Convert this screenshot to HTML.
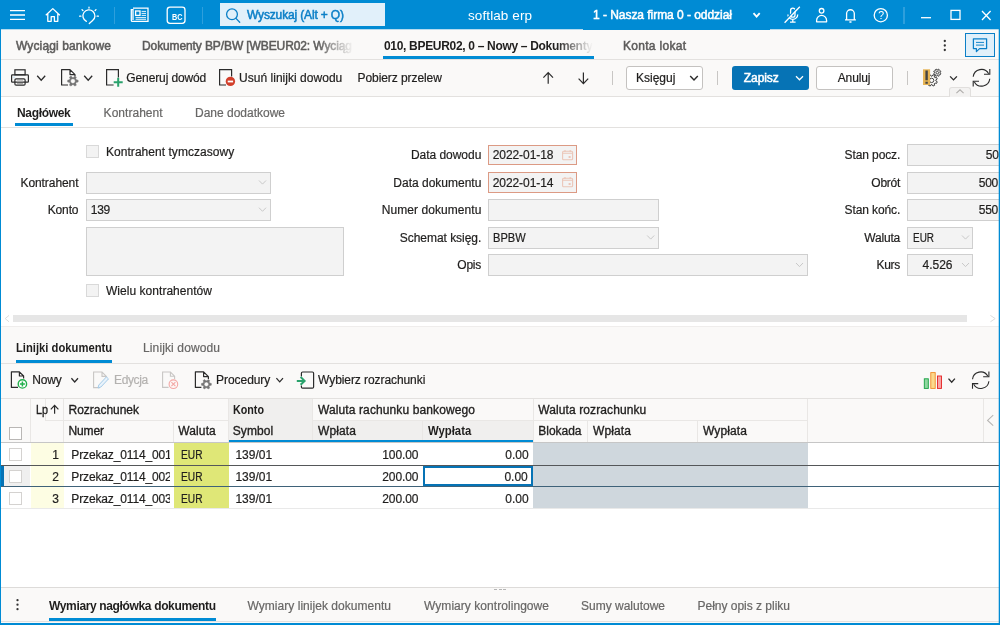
<!DOCTYPE html>
<html lang="pl"><head><meta charset="utf-8"><title>softlab erp</title>
<style>
html,body{margin:0;padding:0;}
body{width:1000px;height:625px;overflow:hidden;position:relative;background:#fff;will-change:transform;font-family:"Liberation Sans", sans-serif;}
.b{position:absolute;box-sizing:border-box;}
.t{position:absolute;white-space:nowrap;line-height:20px;height:20px;-webkit-text-stroke:0.2px currentColor;}
svg{position:absolute;overflow:visible;}
</style></head><body>
<div class="b" style="left:0px;top:0px;width:1000px;height:29px;background:#008bd4;"></div>
<div class="b" style="left:0px;top:29px;width:1000px;height:1px;background:#b5dbef;"></div>
<div class="b" style="left:583px;top:29px;width:187px;height:1px;background:#008bd4;"></div>
<div class="b" style="left:0px;top:29px;width:1000px;height:67px;background:#faf9f8;"></div>
<div class="b" style="left:0px;top:29px;width:1000px;height:1px;background:#b5dbef;"></div>
<div class="b" style="left:583px;top:29px;width:187px;height:1px;background:#008bd4;"></div>
<div class="b" style="left:0px;top:59px;width:1000px;height:1px;background:#e3e1df;"></div>
<div class="b" style="left:0px;top:96px;width:1000px;height:1px;background:#e3e1df;"></div>
<div class="b" style="left:0px;top:127px;width:1000px;height:1px;background:#e3e1df;"></div>
<div class="b" style="left:0px;top:326px;width:1000px;height:116px;background:#faf9f8;"></div>
<div class="b" style="left:0px;top:326px;width:1000px;height:1px;background:#efedec;"></div>
<div class="b" style="left:0px;top:363px;width:1000px;height:1px;background:#e3e1df;"></div>
<div class="b" style="left:0px;top:398px;width:1000px;height:1px;background:#e3e1df;"></div>
<div class="b" style="left:0px;top:588px;width:1000px;height:37px;background:#faf9f8;"></div>
<div class="b" style="left:0px;top:587px;width:1000px;height:1px;background:#dddbd9;"></div>
<div class="b" style="left:0px;top:621px;width:1000px;height:1px;background:#e3e1df;"></div>
<div class="b" style="left:220px;top:3px;width:165px;height:23px;background:#e1f0fa;"></div>
<div class="b" style="left:113.5px;top:7px;width:1.5px;height:17px;background:#2e9fdc;"></div>
<div class="b" style="left:201.5px;top:7px;width:1.5px;height:17px;background:#2e9fdc;"></div>
<div class="b" style="left:902.5px;top:7px;width:2px;height:17px;background:#2e9fdc;"></div>
<div class="b" style="left:318px;top:32px;width:40px;height:26px;background:linear-gradient(90deg,rgba(250,249,248,0),rgba(250,249,248,1) 90%);z-index:2;"></div>
<div class="b" style="left:556px;top:32px;width:40px;height:24px;background:linear-gradient(90deg,rgba(250,249,248,0),rgba(250,249,248,1) 92%);z-index:2;"></div>
<div class="b" style="left:383px;top:56px;width:211px;height:3px;background:#008bd4;z-index:3;"></div>
<div class="b" style="left:965px;top:33px;width:30px;height:24px;background:#e1f0fa;border:1px solid #0b7fc7;"></div>
<div class="b" style="left:612px;top:71px;width:1px;height:14px;background:#c8c6c4;"></div>
<div class="b" style="left:717px;top:71px;width:1px;height:14px;background:#c8c6c4;"></div>
<div class="b" style="left:907px;top:71px;width:1px;height:14px;background:#c8c6c4;"></div>
<div class="b" style="left:626px;top:66px;width:77px;height:24px;background:#fff;border:1px solid #c4c2c0;border-radius:3px;"></div>
<div class="b" style="left:732px;top:66px;width:77px;height:24px;background:#0673b5;border-radius:3px;"></div>
<div class="b" style="left:816px;top:66px;width:77px;height:24px;background:#fff;border:1px solid #c4c2c0;border-radius:3px;"></div>
<div class="b" style="left:949px;top:87px;width:22px;height:10px;background:#f3f2f1;border:1px solid #e1dfdd;border-radius:3px 3px 0 0;border-bottom:none;"></div>
<div class="b" style="left:15px;top:123px;width:58px;height:3px;background:#008bd4;"></div>
<div class="b" style="left:86px;top:145px;width:13px;height:13px;background:#f3f3f3;border:1px solid #d9d9d9;"></div>
<div class="b" style="left:86px;top:172px;width:185px;height:22px;background:#f3f3f3;border:1px solid #cfcfcf;"></div>
<div class="b" style="left:86px;top:199px;width:185px;height:22px;background:#f3f3f3;border:1px solid #cfcfcf;"></div>
<div class="b" style="left:86px;top:227px;width:258px;height:49px;background:#f3f3f3;border:1px solid #cfcfcf;"></div>
<div class="b" style="left:86px;top:284px;width:13px;height:13px;background:#f3f3f3;border:1px solid #d9d9d9;"></div>
<div class="b" style="left:488px;top:145px;width:89px;height:20px;background:#f3f3f3;border:1px solid #dc9a84;"></div>
<div class="b" style="left:488px;top:172px;width:89px;height:21px;background:#f3f3f3;border:1px solid #dc9a84;"></div>
<div class="b" style="left:488px;top:199px;width:171px;height:22px;background:#f3f3f3;border:1px solid #cfcfcf;"></div>
<div class="b" style="left:488px;top:227px;width:171px;height:22px;background:#f3f3f3;border:1px solid #cfcfcf;"></div>
<div class="b" style="left:488px;top:254px;width:320px;height:22px;background:#f3f3f3;border:1px solid #cfcfcf;"></div>
<div class="b" style="left:907px;top:144px;width:100px;height:22px;background:#f3f3f3;border:1px solid #cfcfcf;"></div>
<div class="b" style="left:907px;top:172px;width:100px;height:22px;background:#f3f3f3;border:1px solid #cfcfcf;"></div>
<div class="b" style="left:907px;top:199px;width:100px;height:22px;background:#f3f3f3;border:1px solid #cfcfcf;"></div>
<div class="b" style="left:907px;top:227px;width:66px;height:22px;background:#f3f3f3;border:1px solid #cfcfcf;"></div>
<div class="b" style="left:907px;top:254px;width:66px;height:22px;background:#f3f3f3;border:1px solid #cfcfcf;"></div>
<div class="b" style="left:13px;top:315px;width:954px;height:7px;background:#e6e6e6;"></div>
<div class="b" style="left:16px;top:360px;width:96px;height:3px;background:#008bd4;z-index:3;"></div>
<div class="b" style="left:229px;top:399px;width:83px;height:42px;background:#f0efee;"></div>
<div class="b" style="left:312px;top:421px;width:221px;height:20px;background:#f0efee;"></div>
<div class="b" style="left:30px;top:399px;width:1px;height:43px;background:#e9e7e5;"></div>
<div class="b" style="left:45px;top:399px;width:1px;height:22px;background:#e9e7e5;"></div>
<div class="b" style="left:63px;top:399px;width:1px;height:43px;background:#e9e7e5;"></div>
<div class="b" style="left:173px;top:421px;width:1px;height:21px;background:#e9e7e5;"></div>
<div class="b" style="left:228px;top:399px;width:1px;height:43px;background:#e9e7e5;"></div>
<div class="b" style="left:312px;top:399px;width:1px;height:43px;background:#e9e7e5;"></div>
<div class="b" style="left:422px;top:421px;width:1px;height:21px;background:#e9e7e5;"></div>
<div class="b" style="left:533px;top:399px;width:1px;height:43px;background:#e9e7e5;"></div>
<div class="b" style="left:587px;top:421px;width:1px;height:21px;background:#e9e7e5;"></div>
<div class="b" style="left:697px;top:421px;width:1px;height:21px;background:#e9e7e5;"></div>
<div class="b" style="left:807px;top:399px;width:1px;height:43px;background:#e9e7e5;"></div>
<div class="b" style="left:983px;top:399px;width:1px;height:43px;background:#e9e7e5;"></div>
<div class="b" style="left:45px;top:420px;width:184px;height:1px;background:#e9e7e5;"></div>
<div class="b" style="left:312px;top:420px;width:496px;height:1px;background:#e9e7e5;"></div>
<div class="b" style="left:1px;top:442px;width:998px;height:1px;background:#c6c6c6;"></div>
<div class="b" style="left:229px;top:440px;width:304px;height:2px;background:#008bd4;"></div>
<div class="b" style="left:9px;top:427px;width:13px;height:13px;background:#fff;border:1px solid #b9b7b5;"></div>
<div class="b" style="left:31px;top:443px;width:33px;height:22px;background:#fdfde3;"></div>
<div class="b" style="left:174px;top:443px;width:55px;height:22px;background:#dfe777;"></div>
<div class="b" style="left:533px;top:443px;width:275px;height:22px;background:#cfd7dd;"></div>
<div class="b" style="left:9px;top:448px;width:13px;height:13px;background:#fff;border:1px solid #d4d2d0;z-index:4;"></div>
<div class="b" style="left:31px;top:465px;width:33px;height:22px;background:#fdfde3;"></div>
<div class="b" style="left:174px;top:465px;width:55px;height:22px;background:#dfe777;"></div>
<div class="b" style="left:533px;top:465px;width:275px;height:22px;background:#cfd7dd;"></div>
<div class="b" style="left:9px;top:470px;width:13px;height:13px;background:#fff;border:1px solid #d4d2d0;z-index:4;"></div>
<div class="b" style="left:31px;top:487px;width:33px;height:21px;background:#fdfde3;"></div>
<div class="b" style="left:174px;top:487px;width:55px;height:21px;background:#dfe777;"></div>
<div class="b" style="left:533px;top:487px;width:275px;height:21px;background:#cfd7dd;"></div>
<div class="b" style="left:9px;top:492px;width:13px;height:13px;background:#fff;border:1px solid #d4d2d0;z-index:4;"></div>
<div class="b" style="left:1px;top:508px;width:998px;height:1px;background:#e9e9e9;"></div>
<div class="b" style="left:4px;top:466px;width:26px;height:21px;background:#efefef;"></div>
<div class="b" style="left:1px;top:465px;width:998px;height:1px;background:#555759;z-index:3;"></div>
<div class="b" style="left:1px;top:486px;width:998px;height:1px;background:#3f6279;z-index:3;"></div>
<div class="b" style="left:1px;top:466px;width:3px;height:20px;background:#0673b5;"></div>
<div class="b" style="left:423px;top:466px;width:110px;height:20px;border:2px solid #0673b5;z-index:4;"></div>
<div class="b" style="left:49px;top:618px;width:167px;height:3px;background:#008bd4;z-index:3;"></div>
<div class="b" style="left:494px;top:589px;width:3px;height:1px;background:#b5b5b5;"></div>
<div class="b" style="left:498.5px;top:589px;width:3.5px;height:1px;background:#b5b5b5;"></div>
<div class="b" style="left:503px;top:589px;width:3px;height:1px;background:#b5b5b5;"></div>
<svg width="1000" height="625" viewBox="0 0 1000 625" style="left:0;top:0;z-index:5;pointer-events:none" fill="none"><path d="M259 180.5 l3.5 3.6 l3.5 -3.6" stroke="#c9c9c9" stroke-width="1" fill="none"/><path d="M259 207.7 l3.5 3.6 l3.5 -3.6" stroke="#c9c9c9" stroke-width="1" fill="none"/><path d="M647.2 235.5 l3.5 3.6 l3.5 -3.6" stroke="#c9c9c9" stroke-width="1" fill="none"/><path d="M796 263 l3.5 3.6 l3.5 -3.6" stroke="#c9c9c9" stroke-width="1" fill="none"/><path d="M962 235.5 l3.5 3.6 l3.5 -3.6" stroke="#c9c9c9" stroke-width="1" fill="none"/><path d="M962 263 l3.5 3.6 l3.5 -3.6" stroke="#c9c9c9" stroke-width="1" fill="none"/><path d="M10 10.6 H25 M10 15 H25 M10 19.4 H25" stroke="#fff" stroke-width="1.3" fill="none"/><path d="M45.8 15.3 L52.8 8.6 L59.8 15.3 M47.8 13.6 V21.3 H51.2 V16.6 H54.4 V21.3 H57.8 V13.6" stroke="#fff" stroke-width="1.3" fill="none" stroke-linejoin="round"/><path d="M86.4 21.3 A6 6 0 1 1 92.6 20.6 L89.3 23.6" stroke="#fff" stroke-width="1.3" fill="none" stroke-linecap="round"/><path d="M89 7.2 v0.9 M82 9.6 l0.9 0.9 M96 9.6 l-0.9 0.9 M79.6 16.2 h1.3 M97.1 16.2 h1.3" stroke="#fff" stroke-width="1.3" fill="none" stroke-linecap="round"/><path d="M133 8.2 H148 V21.4 H132.4 Q131.3 21.4 131.3 20.2 V9.6 H133 V20" stroke="#fff" stroke-width="1.3" fill="none" stroke-width="1.1"/><rect x="135.6" y="11" width="4.4" height="4.4" stroke="#fff" stroke-width="1.3" fill="none" stroke-width="1.1"/><path d="M141.6 11.4 H146 M141.6 13.4 H146 M141.6 15.4 H146 M135.6 17.6 H146 M135.6 19.3 H146" stroke="#fff" stroke-width="0.9"/><rect x="167.2" y="7.2" width="17.8" height="16.2" rx="2.8" stroke="#fff" stroke-width="1.3" fill="none" stroke-width="1.2"/><circle cx="232" cy="14.3" r="5.4" stroke="#0b7fc7" stroke-width="1.3"/><path d="M236 18.4 L239.7 22.2" stroke="#0b7fc7" stroke-width="1.3" stroke-linecap="round"/><path d="M753.5 13.2 L756.6 16.6 L759.7 13.2" stroke="#fff" stroke-width="1.8" fill="none"/><rect x="790.6" y="8.2" width="4.4" height="9" rx="2.2" stroke="#fff" stroke-width="1.3" fill="none" stroke-width="0.95"/><path d="M787.9 14.4 a4.9 4.9 0 0 0 9.8 0 M792.8 19.4 V22 M790 22.2 H795.6" stroke="#fff" stroke-width="1.3" fill="none" stroke-width="0.95"/><path d="M798.9 6.0 L783.7 22.0" stroke="#008bd4" stroke-width="1.3" fill="none"/><path d="M799.8 6.8 L784.6 22.8" stroke="#fff" stroke-width="1.3" fill="none" stroke-width="1.15"/><circle cx="821.6" cy="10.8" r="2.3" stroke="#fff" stroke-width="1.3" fill="none" stroke-width="1.05"/><path d="M816.6 21.8 V20.4 A5 5 0 0 1 826.6 20.4 V21.8 Z" stroke="#fff" stroke-width="1.3" fill="none" stroke-width="1.05" stroke-linejoin="round"/><path d="M845 19.8 H855.9 M846.6 19.8 V13.6 A3.85 3.85 0 0 1 854.3 13.6 V19.8 M849.4 22 H851.5" stroke="#fff" stroke-width="1.3" fill="none" stroke-width="1.05"/><circle cx="880.8" cy="15.2" r="6.6" stroke="#fff" stroke-width="1.3" fill="none" stroke-width="1.05"/><path d="M921 17.7 H931" stroke="#fff" stroke-width="1.3" fill="none" stroke-width="1.4"/><rect x="951" y="10.4" width="9" height="9" stroke="#fff" stroke-width="1.3" fill="none" stroke-width="1.3"/><path d="M982 11 L990.6 20 M990.6 11 L982 20" stroke="#fff" stroke-width="1.3" fill="none" stroke-width="1.3"/><circle cx="944.8" cy="41" r="1.15" fill="#333"/><circle cx="944.8" cy="45.5" r="1.15" fill="#333"/><circle cx="944.8" cy="50" r="1.15" fill="#333"/><path d="M973.4 38.8 H986.6 V48.6 H979.6 L976.4 51.6 V48.6 H973.4 Z" stroke="#0b7fc7" stroke-width="1.25" fill="none" stroke-linejoin="round"/><path d="M976 42.4 H984 M976 45.1 H984" stroke="#0b7fc7" stroke-width="0.95"/><rect x="14.9" y="69.8" width="10.2" height="5" stroke="#2b2b2b" stroke-width="1.2" fill="none" fill="#fff"/><rect x="11.6" y="74.9" width="16.8" height="7.3" rx="0.8" stroke="#2b2b2b" stroke-width="1.2" fill="none" fill="#fff"/><rect x="13.2" y="76.6" width="1.6" height="1.2" fill="#bfe0f5"/><rect x="14.9" y="78.8" width="10.2" height="6.4" rx="1.2" stroke="#2b2b2b" stroke-width="1.2" fill="none" fill="#f1f1f1"/><path d="M17 81.1 H23" stroke="#a6a6a6" stroke-width="1.3"/><path d="M17 83.3 H23" stroke="#555" stroke-width="0.6"/><path d="M37.2 75.8 l4.0 4.4 l4.0 -4.4" stroke="#2b2b2b" stroke-width="1.3" fill="none"/><path d="M68 85 H61.6 V69.6 H70 L75 74.6 V76 M70 69.6 V74.6 H75" stroke="#2b2b2b" stroke-width="1.2" fill="none" stroke-linejoin="round"/><path d="M78.12 80.16 L78.12 82.04 L76.38 82.35 L75.73 83.49 L76.32 85.15 L74.70 86.09 L73.56 84.74 L72.24 84.74 L71.10 86.09 L69.48 85.15 L70.07 83.49 L69.42 82.35 L67.68 82.04 L67.68 80.16 L69.42 79.85 L70.07 78.71 L69.48 77.05 L71.10 76.11 L72.24 77.46 L73.56 77.46 L74.70 76.11 L76.32 77.05 L75.73 78.71 L76.38 79.85 Z" stroke="#747474" stroke-width="0.5" fill="#747474" stroke-linejoin="round"/><circle cx="72.9" cy="81.1" r="2.4" stroke="#747474" stroke-width="0.5" fill="#faf9f8"/><path d="M84.2 75.8 l4.0 4.4 l4.0 -4.4" stroke="#2b2b2b" stroke-width="1.3" fill="none"/><path d="M113.6 85 H106.6 V69.6 H118.4 V77.4" stroke="#2b2b2b" stroke-width="1.2" fill="none"/><path d="M118.2 77.8 V86.8 M113.7 82.3 H122.7" stroke="#2aa26c" stroke-width="2"/><path d="M226 85 H219.6 V69.6 H231.6 V76.4" stroke="#2b2b2b" stroke-width="1.2" fill="none"/><circle cx="230.4" cy="81.4" r="4.7" fill="#d23f2b"/><path d="M227.7 81.5 H233.1" stroke="#fff" stroke-width="1.8"/><path d="M548.2 83.8 V72.8 M543.4 77.6 L548.2 72.6 L553 77.6" stroke="#2b2b2b" stroke-width="1.2" fill="none" stroke-width="1.3"/><path d="M583.4 72.4 V83.4 M578.6 78.6 L583.4 83.6 L588.2 78.6" stroke="#2b2b2b" stroke-width="1.2" fill="none" stroke-width="1.3"/><path d="M690.2 76.1 l3.8 3.8 l3.8 -3.8" stroke="#2b2b2b" stroke-width="1.45" fill="none"/><path d="M796 76.2 l3.5 3.6 l3.5 -3.6" stroke="#fff" stroke-width="1.25" fill="none"/><path d="M937.24 81.74 L936.55 83.42 L935.00 83.03 L934.24 83.79 L934.64 85.34 L932.97 86.04 L932.15 84.66 L931.07 84.67 L930.26 86.04 L928.58 85.35 L928.97 83.80 L928.21 83.04 L926.66 83.44 L925.96 81.77 L927.34 80.95 L927.33 79.87 L925.96 79.06 L926.65 77.38 L928.20 77.77 L928.96 77.01 L928.56 75.46 L930.23 74.76 L931.05 76.14 L932.13 76.13 L932.94 74.76 L934.62 75.45 L934.23 77.00 L934.99 77.76 L936.54 77.36 L937.24 79.03 L935.86 79.85 L935.87 80.93 Z" stroke="#333" stroke-width="0.9" fill="none" stroke-linejoin="round"/><circle cx="931.6" cy="80.4" r="2.2" stroke="#333" stroke-width="0.9" fill="none"/><path d="M940.90 73.55 L940.46 74.62 L939.36 74.29 L938.90 74.75 L939.24 75.85 L938.17 76.30 L937.63 75.28 L936.98 75.28 L936.45 76.30 L935.38 75.86 L935.71 74.76 L935.25 74.30 L934.15 74.64 L933.70 73.57 L934.72 73.03 L934.72 72.38 L933.70 71.85 L934.14 70.78 L935.24 71.11 L935.70 70.65 L935.36 69.55 L936.43 69.10 L936.97 70.12 L937.62 70.12 L938.15 69.10 L939.22 69.54 L938.89 70.64 L939.35 71.10 L940.45 70.76 L940.90 71.83 L939.88 72.37 L939.88 73.02 Z" stroke="#333" stroke-width="0.85" fill="none" stroke-linejoin="round"/><circle cx="937.3" cy="72.7" r="1.3" stroke="#333" stroke-width="0.85" fill="none"/><rect x="923" y="69.3" width="7.1" height="15.7" fill="#e6b455"/><path d="M926.6 70.6 V80.3 M926.6 81.7 V83.7" stroke="#444" stroke-width="2.4"/><path d="M950.1 76.4 l3.4 3.5 l3.4 -3.5" stroke="#2b2b2b" stroke-width="1.35" fill="none"/><path d="M973.2 76.8 A8.3 8.3 0 0 1 988.638 73.64999999999999 M989.8 78.8 A8.3 8.3 0 0 1 974.362 81.95" stroke="#2b2b2b" stroke-width="1.1" fill="none"/><path d="M989.8 69.1 V74.314 H983.99 M973.2 86.5 V81.286 H979.01" stroke="#2b2b2b" stroke-width="1.1" fill="none"/><path d="M956.4 93.2 L960 89.8 L963.6 93.2" stroke="#b0aeac" stroke-width="1.1" fill="none"/><rect x="562.6" y="151.2" width="10" height="8.6" rx="1" stroke="#ecc6b8" stroke-width="1.1" fill="none"/><path d="M562.6 153.2 H572.6 M565.0 150 V152 M570.2 150 V152" stroke="#ecc6b8" stroke-width="1.1"/><rect x="568.6" y="156" width="2" height="2" fill="#ecc6b8"/><rect x="562.6" y="178.2" width="10" height="8.6" rx="1" stroke="#ecc6b8" stroke-width="1.1" fill="none"/><path d="M562.6 180.2 H572.6 M565.0 177 V179 M570.2 177 V179" stroke="#ecc6b8" stroke-width="1.1"/><rect x="568.6" y="183" width="2" height="2" fill="#ecc6b8"/><path d="M9 315.4 L5.2 318.6 L9 321.8" stroke="#dcdcdc" stroke-width="1" fill="none"/><path d="M990.4 315.4 L995.2 318.6 L990.4 321.8" stroke="#dcdcdc" stroke-width="1" fill="none"/><path d="M18 387.4 H11.4 V371.8 H19.4 L23.6 376 V378.6 M19.4 371.8 V376 H23.6" stroke="#2b2b2b" stroke-width="1.2" fill="none" stroke-width="1.1" stroke-linejoin="round"/><circle cx="22.4" cy="383.9" r="4.2" stroke="#22b04c" stroke-width="1.4" fill="#fff"/><path d="M22.4 381.4 V386.4 M19.9 383.9 H24.9" stroke="#22b04c" stroke-width="1.5"/><path d="M71.4 378.2 l3.3 3.7 l3.3 -3.7" stroke="#2b2b2b" stroke-width="1.3" fill="none"/><path d="M100 387.6 H93.6 V372 H102 L106.4 376.4 V377.4 M102 372 V376.4 H106.4" stroke="#c8c6c4" stroke-width="1.1" fill="none"/><path d="M98 388 L98.8 385 L106.4 376.9 L108.5 378.9 L100.9 387 Z" stroke="#a5cbe8" stroke-width="1.0" fill="#e9f3fb" stroke-linejoin="round"/><path d="M168.6 387.4 H162.6 V372 H170.4 L174.6 376.2 V379 M170.4 372 V376.2 H174.6" stroke="#c8c6c4" stroke-width="1.1" fill="none"/><circle cx="173.4" cy="384.2" r="4.3" stroke="#f3a7a4" stroke-width="1.1" fill="#fdf6f5"/><path d="M171.4 382.2 L175.4 386.2 M175.4 382.2 L171.4 386.2" stroke="#f3a7a4" stroke-width="1.1"/><path d="M201.4 387.4 H195.4 V371.8 H203.6 L208.4 376.6 V379 M203.6 371.8 V376.6 H208.4" stroke="#2b2b2b" stroke-width="1.2" fill="none" stroke-width="1.1" stroke-linejoin="round"/><path d="M211.32 383.41 L211.32 385.19 L209.69 385.49 L209.07 386.56 L209.63 388.12 L208.09 389.00 L207.02 387.74 L205.78 387.74 L204.71 389.00 L203.17 388.12 L203.73 386.56 L203.11 385.49 L201.48 385.19 L201.48 383.41 L203.11 383.11 L203.73 382.04 L203.17 380.48 L204.71 379.60 L205.78 380.86 L207.02 380.86 L208.09 379.60 L209.63 380.48 L209.07 382.04 L209.69 383.11 Z" stroke="#747474" stroke-width="0.5" fill="#747474" stroke-linejoin="round"/><circle cx="206.4" cy="384.3" r="2.2" stroke="#747474" stroke-width="0.5" fill="#faf9f8"/><path d="M276.4 378.1 l3.3 3.7 l3.3 -3.7" stroke="#2b2b2b" stroke-width="1.25" fill="none"/><path d="M301.4 376.4 V373.2 Q301.4 372 302.6 372 H312.4 Q313.6 372 313.6 373.2 V387 Q313.6 388.2 312.4 388.2 H302.6 Q301.4 388.2 301.4 387 V385.4" stroke="#2b2b2b" stroke-width="1.2" fill="none" stroke-width="1.1"/><path d="M296.8 380.9 H303.6 M300.6 377 L304.6 380.9 L300.6 384.8" stroke="#2aa26c" stroke-width="2" fill="none"/><rect x="924.3" y="378.8" width="4" height="9.6" fill="#8fd7a0" stroke="#15a041" stroke-width="0.9"/><rect x="930.8" y="372.6" width="4.4" height="15.8" fill="#fbd98c" stroke="#f08a24" stroke-width="0.9"/><rect x="937.5" y="376" width="4" height="12.4" fill="#f7a3a3" stroke="#e52222" stroke-width="0.9"/><path d="M948.5 378.6 l3.2 3.7 l3.2 -3.7" stroke="#2b2b2b" stroke-width="1.3" fill="none"/><path d="M972.5 379.2 A8.2 8.2 0 0 1 987.7520000000001 376.09999999999997 M988.9000000000001 381.2 A8.2 8.2 0 0 1 973.648 384.3" stroke="#2b2b2b" stroke-width="1.1" fill="none"/><path d="M988.9000000000001 371.6 V376.756 H983.1600000000001 M972.5 388.79999999999995 V383.644 H978.24" stroke="#2b2b2b" stroke-width="1.1" fill="none"/><path d="M54.6 413.8 V405.6 M50.8 409.4 L54.6 405.4 L58.4 409.4" stroke="#2b2b2b" stroke-width="1.2" fill="none" stroke-width="1.1"/><path d="M993.2 415.2 L987.6 420.4 L993.2 425.6" stroke="#b7b5b3" stroke-width="1.1" fill="none"/><circle cx="17.5" cy="600.2" r="1.15" fill="#333"/><circle cx="17.5" cy="604.7" r="1.15" fill="#333"/><circle cx="17.5" cy="609.2" r="1.15" fill="#333"/></svg>
<div class="b" style="left:0px;top:29px;width:1px;height:596px;background:#008bd4;z-index:6;"></div>
<div class="b" style="left:999px;top:29px;width:1px;height:596px;background:#008bd4;z-index:6;"></div>
<div class="b" style="left:998px;top:29px;width:1px;height:594px;background:rgba(0,139,212,0.28);z-index:6;"></div>
<div class="b" style="left:0px;top:623px;width:1000px;height:2px;background:#008bd4;z-index:6;"></div>
<span class="t" id="t0" style="top:5.00px;font-size:12px;color:#0b7fc7;letter-spacing:-0.152px;left:247px;-webkit-text-stroke:0.5px currentColor;">Wyszukaj (Alt + Q)</span>
<span class="t" id="t1" style="top:5.50px;font-size:13.5px;color:#fff;letter-spacing:0.095px;left:468px;-webkit-text-stroke:0;">softlab erp</span>
<span class="t" id="t2" style="top:5.00px;font-size:12px;color:#fff;letter-spacing:-0.041px;left:593px;-webkit-text-stroke:0.5px currentColor;">1 - Nasza firma 0 - oddział</span>
<span class="t" id="t3" style="top:7.00px;font-size:8.5px;color:#fff;font-weight:700;-webkit-text-stroke:0;left:171.5px;display:inline-block;transform:scaleX(0.8550);transform-origin:left center;">BC</span>
<span class="t" id="t4" style="top:5.00px;font-size:10.5px;color:#fff;left:878.3px;-webkit-text-stroke:0;">?</span>
<span class="t" id="t5" style="top:36.00px;font-size:12px;color:#5c5b5a;letter-spacing:0.123px;left:16px;-webkit-text-stroke:0.5px currentColor;">Wyciągi bankowe</span>
<span class="t" id="t6" style="top:36.00px;font-size:12px;color:#5c5b5a;letter-spacing:-0.106px;left:142px;-webkit-text-stroke:0.5px currentColor;">Dokumenty BP/BW [WBEUR02: Wyciąg</span>
<span class="t" id="t7" style="top:36.00px;font-size:12px;color:#1f1e1d;font-weight:700;-webkit-text-stroke:0;letter-spacing:-0.316px;left:384px;">010, BPEUR02, 0 – Nowy – Dokumenty</span>
<span class="t" id="t8" style="top:36.00px;font-size:12px;color:#5c5b5a;letter-spacing:0.295px;left:623px;-webkit-text-stroke:0.5px currentColor;">Konta lokat</span>
<span class="t" id="t9" style="top:68.00px;font-size:12px;color:#1f1e1d;letter-spacing:-0.116px;left:126.3px;">Generuj dowód</span>
<span class="t" id="t10" style="top:68.00px;font-size:12px;color:#1f1e1d;letter-spacing:0.031px;left:239px;">Usuń linijki dowodu</span>
<span class="t" id="t11" style="top:68.00px;font-size:12px;color:#1f1e1d;letter-spacing:-0.070px;left:357.5px;">Pobierz przelew</span>
<span class="t" id="t12" style="top:68.00px;font-size:12px;color:#1f1e1d;letter-spacing:0.007px;left:636px;">Księguj</span>
<span class="t" id="t13" style="top:68.00px;font-size:12px;color:#fff;letter-spacing:-0.069px;left:743.8px;-webkit-text-stroke:0.5px currentColor;">Zapisz</span>
<span class="t" id="t14" style="top:68.00px;font-size:12px;color:#1f1e1d;letter-spacing:-0.112px;left:837.7px;">Anuluj</span>
<span class="t" id="t15" style="top:103.00px;font-size:12px;color:#1f1e1d;font-weight:700;-webkit-text-stroke:0;letter-spacing:-0.331px;left:17px;">Nagłówek</span>
<span class="t" id="t16" style="top:103.00px;font-size:12px;color:#686766;letter-spacing:0.031px;left:103.6px;">Kontrahent</span>
<span class="t" id="t17" style="top:103.00px;font-size:12px;color:#686766;letter-spacing:-0.006px;left:195px;">Dane dodatkowe</span>
<span class="t" id="t18" style="top:142.00px;font-size:12px;color:#1f1e1d;letter-spacing:0.040px;left:106px;">Kontrahent tymczasowy</span>
<span class="t" id="t19" style="top:173.00px;font-size:12px;color:#1f1e1d;letter-spacing:-0.080px;right:921.58px;">Kontrahent</span>
<span class="t" id="t20" style="top:200.00px;font-size:12px;color:#1f1e1d;letter-spacing:-0.140px;right:921.64px;">Konto</span>
<span class="t" id="t21" style="top:200.00px;font-size:12px;color:#1f1e1d;letter-spacing:-0.316px;left:90.8px;">139</span>
<span class="t" id="t22" style="top:281.00px;font-size:12px;color:#1f1e1d;letter-spacing:0.036px;left:106px;">Wielu kontrahentów</span>
<span class="t" id="t23" style="top:145.00px;font-size:12px;color:#1f1e1d;letter-spacing:-0.032px;right:518.73px;">Data dowodu</span>
<span class="t" id="t24" style="top:173.00px;font-size:12px;color:#1f1e1d;letter-spacing:-0.005px;right:518.70px;">Data dokumentu</span>
<span class="t" id="t25" style="top:200.00px;font-size:12px;color:#1f1e1d;letter-spacing:0.056px;right:518.64px;">Numer dokumentu</span>
<span class="t" id="t26" style="top:228.00px;font-size:12px;color:#1f1e1d;letter-spacing:-0.042px;right:518.74px;">Schemat księg.</span>
<span class="t" id="t27" style="top:255.00px;font-size:12px;color:#1f1e1d;letter-spacing:-0.229px;right:518.93px;">Opis</span>
<span class="t" id="t28" style="top:145.00px;font-size:12px;color:#1f1e1d;letter-spacing:-0.066px;left:492.7px;">2022-01-18</span>
<span class="t" id="t29" style="top:173.00px;font-size:12px;color:#1f1e1d;letter-spacing:-0.066px;left:492.7px;">2022-01-14</span>
<span class="t" id="t30" style="top:228.00px;font-size:12px;color:#1f1e1d;left:493px;display:inline-block;transform:scaleX(0.9224);transform-origin:left center;">BPBW</span>
<span class="t" id="t31" style="top:145.00px;font-size:12px;color:#1f1e1d;letter-spacing:-0.111px;right:99.81px;">Stan pocz.</span>
<span class="t" id="t32" style="top:173.00px;font-size:12px;color:#1f1e1d;letter-spacing:-0.254px;right:99.95px;">Obrót</span>
<span class="t" id="t33" style="top:200.00px;font-size:12px;color:#1f1e1d;letter-spacing:-0.111px;right:99.81px;">Stan końc.</span>
<span class="t" id="t34" style="top:228.00px;font-size:12px;color:#1f1e1d;letter-spacing:-0.181px;right:99.88px;">Waluta</span>
<span class="t" id="t35" style="top:255.00px;font-size:12px;color:#1f1e1d;letter-spacing:-0.296px;right:100.00px;">Kurs</span>
<span class="t" id="t36" style="top:145.00px;font-size:12px;color:#1f1e1d;letter-spacing:-0.300px;left:985.8px;">50</span>
<span class="t" id="t37" style="top:173.00px;font-size:12px;color:#1f1e1d;letter-spacing:-0.300px;left:978.8px;">500</span>
<span class="t" id="t38" style="top:200.00px;font-size:12px;color:#1f1e1d;letter-spacing:-0.300px;left:978.8px;">550</span>
<span class="t" id="t39" style="top:228.00px;font-size:12px;color:#1f1e1d;left:912.6px;display:inline-block;transform:scaleX(0.8286);transform-origin:left center;">EUR</span>
<span class="t" id="t40" style="top:255.00px;font-size:12px;color:#1f1e1d;letter-spacing:-0.008px;left:922.5px;">4.526</span>
<span class="t" id="t41" style="top:338.00px;font-size:12px;color:#1f1e1d;font-weight:700;-webkit-text-stroke:0;left:16.2px;display:inline-block;transform:scaleX(0.9370);transform-origin:left center;">Linijki dokumentu</span>
<span class="t" id="t42" style="top:338.00px;font-size:12px;color:#686766;letter-spacing:0.124px;left:143px;">Linijki dowodu</span>
<span class="t" id="t43" style="top:370.00px;font-size:12px;color:#1f1e1d;letter-spacing:-0.205px;left:32.3px;">Nowy</span>
<span class="t" id="t44" style="top:370.00px;font-size:12px;color:#b4b2b0;letter-spacing:-0.366px;left:114px;">Edycja</span>
<span class="t" id="t45" style="top:370.00px;font-size:12px;color:#1f1e1d;letter-spacing:-0.063px;left:216.1px;">Procedury</span>
<span class="t" id="t46" style="top:370.00px;font-size:12px;color:#1f1e1d;letter-spacing:-0.077px;left:318.1px;">Wybierz rozrachunki</span>
<span class="t" id="t47" style="top:400.00px;font-size:12px;color:#1f1e1d;left:35.6px;display:inline-block;transform:scaleX(0.8982);transform-origin:left center;-webkit-text-stroke:0.33px currentColor;">Lp</span>
<span class="t" id="t48" style="top:400.00px;font-size:12px;color:#1f1e1d;letter-spacing:-0.022px;left:68.5px;-webkit-text-stroke:0.33px currentColor;">Rozrachunek</span>
<span class="t" id="t49" style="top:400.00px;font-size:12px;color:#1f1e1d;font-weight:700;-webkit-text-stroke:0;left:232.7px;display:inline-block;transform:scaleX(0.8945);transform-origin:left center;">Konto</span>
<span class="t" id="t50" style="top:400.00px;font-size:12px;color:#1f1e1d;letter-spacing:0.111px;left:318px;-webkit-text-stroke:0.33px currentColor;">Waluta rachunku bankowego</span>
<span class="t" id="t51" style="top:400.00px;font-size:12px;color:#1f1e1d;letter-spacing:0.101px;left:538.3px;-webkit-text-stroke:0.33px currentColor;">Waluta rozrachunku</span>
<span class="t" id="t52" style="top:421.00px;font-size:12px;color:#1f1e1d;letter-spacing:-0.129px;left:68.5px;-webkit-text-stroke:0.33px currentColor;">Numer</span>
<span class="t" id="t53" style="top:421.00px;font-size:12px;color:#1f1e1d;letter-spacing:0.119px;left:178.3px;-webkit-text-stroke:0.33px currentColor;">Waluta</span>
<span class="t" id="t54" style="top:421.00px;font-size:12px;color:#1f1e1d;letter-spacing:0.117px;left:232.7px;-webkit-text-stroke:0.33px currentColor;">Symbol</span>
<span class="t" id="t55" style="top:421.00px;font-size:12px;color:#1f1e1d;letter-spacing:0.128px;left:318px;-webkit-text-stroke:0.33px currentColor;">Wpłata</span>
<span class="t" id="t56" style="top:421.00px;font-size:12px;color:#1f1e1d;font-weight:700;-webkit-text-stroke:0;left:428.4px;display:inline-block;transform:scaleX(0.9433);transform-origin:left center;">Wypłata</span>
<span class="t" id="t57" style="top:421.00px;font-size:12px;color:#1f1e1d;letter-spacing:-0.029px;left:538.3px;-webkit-text-stroke:0.33px currentColor;">Blokada</span>
<span class="t" id="t58" style="top:421.00px;font-size:12px;color:#1f1e1d;letter-spacing:0.128px;left:593px;-webkit-text-stroke:0.33px currentColor;">Wpłata</span>
<span class="t" id="t59" style="top:421.00px;font-size:12px;color:#1f1e1d;letter-spacing:0.125px;left:703px;-webkit-text-stroke:0.33px currentColor;">Wypłata</span>
<span class="t" id="t60" style="top:445.00px;font-size:12px;color:#1f1e1d;letter-spacing:-0.300px;right:941.30px;">1</span>
<span class="t" id="t61" style="top:445.00px;font-size:12px;color:#1f1e1d;letter-spacing:-0.135px;left:71.3px;width:98.5px;overflow:hidden;">Przekaz_0114_001</span>
<span class="t" id="t62" style="top:445.00px;font-size:12px;color:#1f1e1d;left:181.2px;display:inline-block;transform:scaleX(0.8483);transform-origin:left center;">EUR</span>
<span class="t" id="t63" style="top:445.00px;font-size:12px;color:#1f1e1d;letter-spacing:0.019px;left:235.4px;">139/01</span>
<span class="t" id="t64" style="top:445.00px;font-size:12px;color:#1f1e1d;letter-spacing:-0.101px;right:581.60px;">100.00</span>
<span class="t" id="t65" style="top:445.00px;font-size:12px;color:#1f1e1d;letter-spacing:0.014px;right:471.29px;">0.00</span>
<span class="t" id="t66" style="top:467.00px;font-size:12px;color:#1f1e1d;letter-spacing:-0.300px;right:941.30px;">2</span>
<span class="t" id="t67" style="top:467.00px;font-size:12px;color:#1f1e1d;letter-spacing:-0.135px;left:71.3px;width:98.5px;overflow:hidden;">Przekaz_0114_002</span>
<span class="t" id="t68" style="top:467.00px;font-size:12px;color:#1f1e1d;left:181.2px;display:inline-block;transform:scaleX(0.8483);transform-origin:left center;">EUR</span>
<span class="t" id="t69" style="top:467.00px;font-size:12px;color:#1f1e1d;letter-spacing:0.019px;left:235.4px;">139/01</span>
<span class="t" id="t70" style="top:467.00px;font-size:12px;color:#1f1e1d;letter-spacing:-0.101px;right:581.60px;">200.00</span>
<span class="t" id="t71" style="top:467.00px;font-size:12px;color:#1f1e1d;letter-spacing:0.014px;right:472.19px;">0.00</span>
<span class="t" id="t72" style="top:489.00px;font-size:12px;color:#1f1e1d;letter-spacing:-0.300px;right:941.30px;">3</span>
<span class="t" id="t73" style="top:489.00px;font-size:12px;color:#1f1e1d;letter-spacing:-0.135px;left:71.3px;width:98.5px;overflow:hidden;">Przekaz_0114_003</span>
<span class="t" id="t74" style="top:489.00px;font-size:12px;color:#1f1e1d;left:181.2px;display:inline-block;transform:scaleX(0.8483);transform-origin:left center;">EUR</span>
<span class="t" id="t75" style="top:489.00px;font-size:12px;color:#1f1e1d;letter-spacing:0.019px;left:235.4px;">139/01</span>
<span class="t" id="t76" style="top:489.00px;font-size:12px;color:#1f1e1d;letter-spacing:-0.101px;right:581.60px;">200.00</span>
<span class="t" id="t77" style="top:489.00px;font-size:12px;color:#1f1e1d;letter-spacing:0.014px;right:471.29px;">0.00</span>
<span class="t" id="t78" style="top:596.00px;font-size:12px;color:#1f1e1d;font-weight:700;-webkit-text-stroke:0;letter-spacing:-0.353px;left:49px;">Wymiary nagłówka dokumentu</span>
<span class="t" id="t79" style="top:596.00px;font-size:12px;color:#686766;letter-spacing:0.037px;left:247.5px;">Wymiary linijek dokumentu</span>
<span class="t" id="t80" style="top:596.00px;font-size:12px;color:#686766;letter-spacing:0.053px;left:424px;">Wymiary kontrolingowe</span>
<span class="t" id="t81" style="top:596.00px;font-size:12px;color:#686766;letter-spacing:-0.004px;left:581px;">Sumy walutowe</span>
<span class="t" id="t82" style="top:596.00px;font-size:12px;color:#686766;letter-spacing:-0.013px;left:697.5px;">Pełny opis z pliku</span>
</body></html>
